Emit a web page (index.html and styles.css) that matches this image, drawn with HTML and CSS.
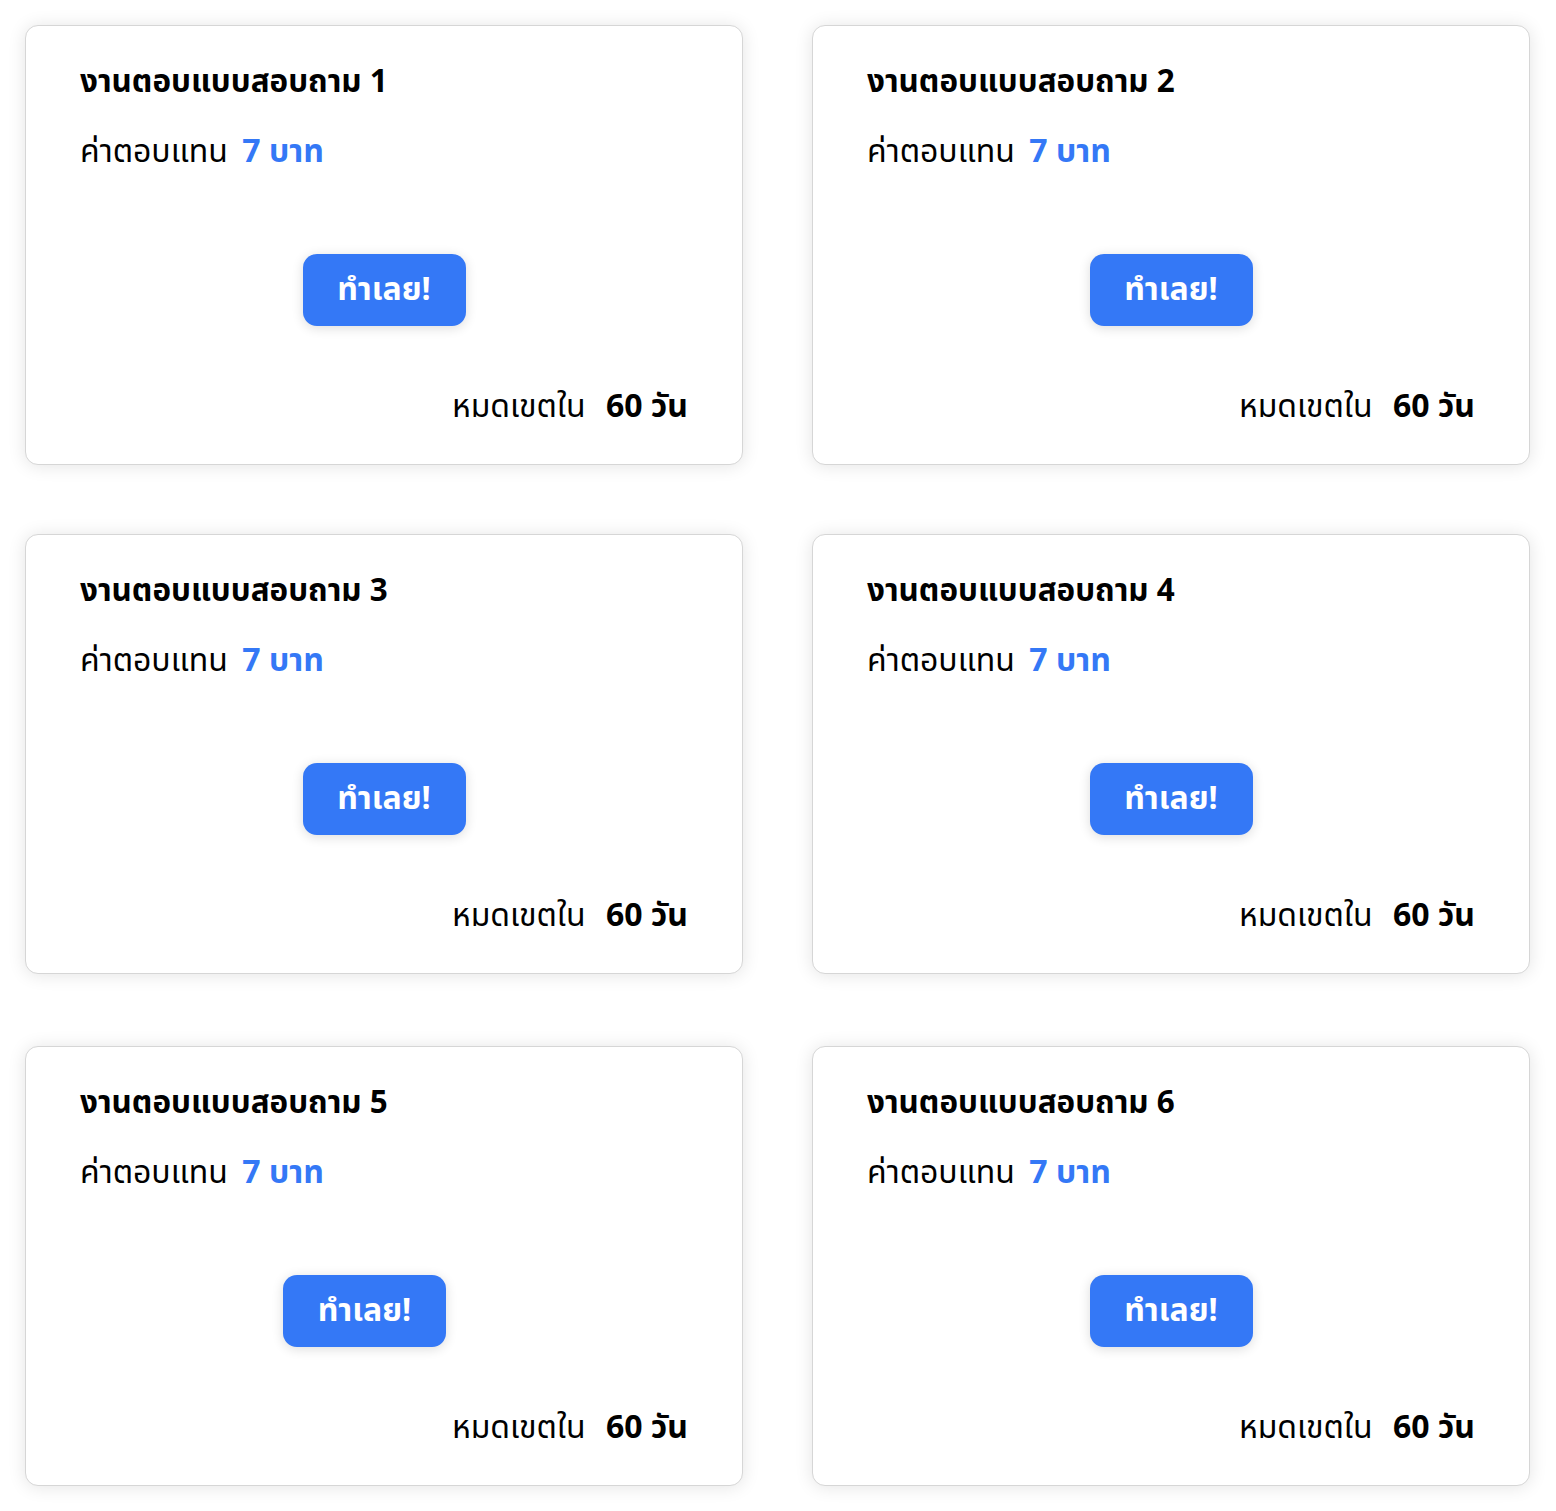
FILE: index.html
```html
<!DOCTYPE html>
<html lang="th">
<head>
<meta charset="utf-8">
<title>งานตอบแบบสอบถาม</title>
<link rel="stylesheet" href="styles.css">
</head>
<body>
<main class="grid">
  <section class="card">
    <h2 class="title">งานตอบแบบสอบถาม 1</h2>
    <p class="reward">ค่าตอบแทน <span class="amount">7 บาท</span></p>
    <div class="action"><button class="btn">ทำเลย!</button></div>
    <p class="deadline">หมดเขตใน <strong class="days">60 วัน</strong></p>
  </section>
  <section class="card">
    <h2 class="title">งานตอบแบบสอบถาม 2</h2>
    <p class="reward">ค่าตอบแทน <span class="amount">7 บาท</span></p>
    <div class="action"><button class="btn">ทำเลย!</button></div>
    <p class="deadline">หมดเขตใน <strong class="days">60 วัน</strong></p>
  </section>
  <section class="card">
    <h2 class="title">งานตอบแบบสอบถาม 3</h2>
    <p class="reward">ค่าตอบแทน <span class="amount">7 บาท</span></p>
    <div class="action"><button class="btn">ทำเลย!</button></div>
    <p class="deadline">หมดเขตใน <strong class="days">60 วัน</strong></p>
  </section>
  <section class="card">
    <h2 class="title">งานตอบแบบสอบถาม 4</h2>
    <p class="reward">ค่าตอบแทน <span class="amount">7 บาท</span></p>
    <div class="action"><button class="btn">ทำเลย!</button></div>
    <p class="deadline">หมดเขตใน <strong class="days">60 วัน</strong></p>
  </section>
  <section class="card card-low">
    <h2 class="title">งานตอบแบบสอบถาม 5</h2>
    <p class="reward">ค่าตอบแทน <span class="amount">7 บาท</span></p>
    <div class="action action-shift"><button class="btn">ทำเลย!</button></div>
    <p class="deadline">หมดเขตใน <strong class="days">60 วัน</strong></p>
  </section>
  <section class="card card-low">
    <h2 class="title">งานตอบแบบสอบถาม 6</h2>
    <p class="reward">ค่าตอบแทน <span class="amount">7 บาท</span></p>
    <div class="action"><button class="btn">ทำเลย!</button></div>
    <p class="deadline">หมดเขตใน <strong class="days">60 วัน</strong></p>
  </section>
</main>
</body>
</html>
```

FILE: styles.css
```css
* { box-sizing: border-box; }

html, body {
  margin: 0;
  padding: 0;
  background: #ffffff;
}

body {
  font-family: "Noto Sans Thai", "Noto Sans", sans-serif;
  color: #000000;
}

.grid {
  display: grid;
  grid-template-columns: 1fr 1fr;
  column-gap: 69px;
  row-gap: 69px;
  padding: 25px 26px 26px 25px;
}

.card {
  height: 440px;
  background: #ffffff;
  border: 1px solid #d6d6d6;
  border-radius: 13px;
  box-shadow: 0 1px 18px rgba(0, 0, 0, 0.11);
  padding: 36px 54px 0 54px;
  display: flex;
  flex-direction: column;
}

.card-low {
  margin-top: 3px;
}

.title {
  margin: 0;
  font-size: 31.4px;
  font-weight: 700;
  line-height: 42px;
}

.reward {
  margin: 27px 0 0 0;
  font-size: 32px;
  font-weight: 400;
  line-height: 42px;
  word-spacing: 6px;
}

.amount {
  color: #3478f6;
  font-weight: 700;
  word-spacing: 0;
}

.action {
  display: flex;
  justify-content: center;
  margin-top: 81px;
}

.action-shift {
  margin-right: 39px;
}

.btn {
  width: 163px;
  height: 72px;
  border: none;
  border-radius: 14px;
  background: #3478f6;
  color: #ffffff;
  font-family: inherit;
  font-size: 32px;
  font-weight: 700;
  box-shadow: 0 2px 12px rgba(0, 0, 0, 0.14);
  padding: 0;
}

.deadline {
  margin: 60px 0 0 0;
  text-align: right;
  font-size: 32px;
  line-height: 42px;
  word-spacing: 12px;
}

.days {
  font-weight: 700;
  word-spacing: 0;
}
```
